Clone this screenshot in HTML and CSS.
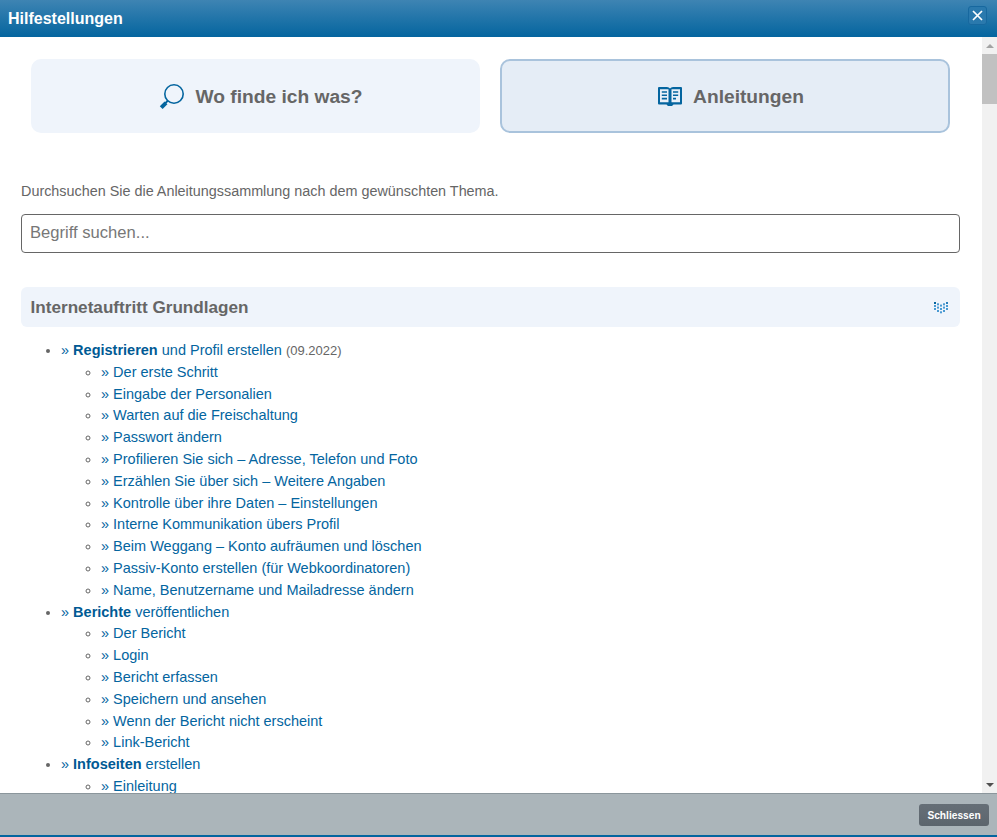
FILE: index.html
```html
<!DOCTYPE html>
<html lang="de">
<head>
<meta charset="utf-8">
<title>Hilfestellungen</title>
<link rel="stylesheet" href="styles.css">
</head>
<body>
<div class="dialog">
  <header class="titlebar">
    <span class="title">Hilfestellungen</span>
    <button class="close" aria-label="Schliessen">
      <svg width="11" height="11" viewBox="0 0 11 11"><path d="M1 1 10 10M10 1 1 10" stroke="#fff" stroke-width="1.7" fill="none"/></svg>
    </button>
  </header>
  <div class="body">
    <main class="content">
      <div class="tabs">
        <a class="tab">
          <svg class="tab-icon" width="26" height="26" viewBox="0 0 26 26"><circle cx="15" cy="10" r="9.200" fill="none" stroke="#04659f" stroke-width="1.600"/><path d="M9 16.500 6 19.500" stroke="#04659f" stroke-width="1.800"/><path d="M7 18.800 2.200 23.600" stroke="#04659f" stroke-width="4"/></svg>
          Wo finde ich was?
        </a>
        <a class="tab active">
          <svg class="tab-icon" width="26" height="22" viewBox="0 0 26 22"><path d="M2 1h8q2 0 3 1.500q1-1.500 3-1.500h8q1 0 1 1v15.500q0 1-1 1h-7.500l-1.500 1.500h-4l-1.500-1.500h-7.500q-1 0-1-1v-15.500q0-1 1-1z" fill="#04659f"/><path d="M3 3.200h8.500v13h-8.500zM14.500 3.200h8.500v13h-8.500z" fill="#e9f0f8"/><path d="M4.800 6h5.200M4.800 9.300h5.200M4.800 12.600h5.200M16 6h5.200M16 9.300h5.200M16 12.600h3" stroke="#04659f" stroke-width="1.600"/></svg>
          Anleitungen
        </a>
      </div>
      <p class="intro">Durchsuchen Sie die Anleitungssammlung nach dem gewünschten Thema.</p>
      <input class="search" type="text" placeholder="Begriff suchen...">
      <section class="panel">
        <h2 class="panel-head">Internetauftritt Grundlagen
          <svg width="14" height="12" viewBox="0 0 14 12" class="panel-icon"><g fill="#4a9ad2"><rect x="0" y="0" width="2" height="2" fill="#04659f"/><rect x="0" y="3" width="2" height="2"/><rect x="0" y="6" width="2" height="2"/><rect x="3" y="1.300" width="2" height="2"/><rect x="3" y="4.600" width="2" height="2"/><rect x="3" y="8" width="2" height="2"/><rect x="6" y="2.600" width="2" height="2"/><rect x="6" y="6" width="2" height="2"/><rect x="6" y="9.300" width="2" height="2"/><rect x="9" y="1.300" width="2" height="2"/><rect x="9" y="4.600" width="2" height="2"/><rect x="9" y="8" width="2" height="2"/><rect x="12" y="0" width="2" height="2" fill="#2a7fba"/><rect x="12" y="3" width="2" height="2"/><rect x="12" y="6" width="2" height="2"/></g></svg>
        </h2>
        <ul class="l1">
          <li><a>» <b>Registrieren</b> und Profil erstellen</a> <span class="date">(09.2022)</span>
            <ul class="l2">
              <li><a>» Der erste Schritt</a></li>
              <li><a>» Eingabe der Personalien</a></li>
              <li><a>» Warten auf die Freischaltung</a></li>
              <li><a>» Passwort ändern</a></li>
              <li><a>» Profilieren Sie sich – Adresse, Telefon und Foto</a></li>
              <li><a>» Erzählen Sie über sich – Weitere Angaben</a></li>
              <li><a>» Kontrolle über ihre Daten – Einstellungen</a></li>
              <li><a>» Interne Kommunikation übers Profil</a></li>
              <li><a>» Beim Weggang – Konto aufräumen und löschen</a></li>
              <li><a>» Passiv-Konto erstellen (für Webkoordinatoren)</a></li>
              <li><a>» Name, Benutzername und Mailadresse ändern</a></li>
            </ul>
          </li>
          <li><a>» <b>Berichte</b> veröffentlichen</a>
            <ul class="l2">
              <li><a>» Der Bericht</a></li>
              <li><a>» Login</a></li>
              <li><a>» Bericht erfassen</a></li>
              <li><a>» Speichern und ansehen</a></li>
              <li><a>» Wenn der Bericht nicht erscheint</a></li>
              <li><a>» Link-Bericht</a></li>
            </ul>
          </li>
          <li><a>» <b>Infoseiten</b> erstellen</a>
            <ul class="l2">
              <li><a>» Einleitung</a></li>
            </ul>
          </li>
        </ul>
      </section>
    </main>
    <div class="scrollbar">
      <span class="arrow up"></span>
      <span class="thumb"></span>
      <span class="spacer"></span>
      <span class="arrow down"></span>
    </div>
  </div>
  <footer class="footer">
    <button class="closebtn">Schliessen</button>
  </footer>
</div>
</body>
</html>
```
FILE: styles.css
```css
* { box-sizing: border-box; }
html, body { margin: 0; height: 100%; overflow: hidden; }
body { font-family: "Liberation Sans", Arial, sans-serif; background: #fff; color: #666; }
.dialog { height: 837px; display: flex; flex-direction: column; border-bottom: 2px solid #04659f; }
.titlebar { height: 37px; flex: none; display: flex; align-items: center; justify-content: space-between; padding: 0 10px 0 8px; background: linear-gradient(#3e84b3, #04659f); }
.title { color: #fff; font-weight: bold; font-size: 16px; }
.close { width: 19px; height: 19px; padding: 0; display: flex; align-items: center; justify-content: center; background: #2a79ad; border: 1px solid #17689f; border-radius: 3px; margin-top: -6px; }
.body { flex: 1; min-height: 0; display: flex; }
.content { flex: 1; min-width: 0; overflow: hidden; padding: 22px 22px 0 21px; }
.tabs { display: flex; gap: 20px; padding: 0 10px; }
.tab { flex: 1; height: 74px; padding: 1px 0 0 11px; border-radius: 10px; background: #eff4fb; display: flex; align-items: center; justify-content: center; gap: 10px; font-size: 19.2px; font-weight: bold; color: #666; }
.tab.active { flex: none; width: 450px; background: #e5edf6; border: 2px solid #a9c3dc; }
.tab-icon { flex: none; }
.intro { margin: 50px 0 0; font-size: 14.38px; line-height: 17px; color: #666; }
.search { display: block; width: 100%; height: 39px; margin-top: 14px; padding: 0 8px 2px; border: 1px solid #666; border-radius: 4px; font: 16.6px "Liberation Sans", Arial, sans-serif; color: #666; outline: none; }
.search::placeholder { color: #777; opacity: 1; }
.panel { margin-top: 34px; }
.panel-head { margin: 0; height: 40px; padding: 1px 12px 0 9.500px; display: flex; align-items: center; justify-content: space-between; background: #eff4fb; border-radius: 6px; font-size: 17.150px; font-weight: bold; color: #666; }
.panel-icon { flex: none; }
.l1, .l2 { margin: 0; padding-left: 40px; font-size: 14.5px; line-height: 21.8px; color: #666; }
.l1 { margin-top: 13px; }
.l2 { list-style: circle; }
a { color: #04659f; }
a b { color: #005a94; }
.date { font-size: 13px; color: #666; }
.scrollbar { width: 15px; flex: none; background: #f1f1f1; display: flex; flex-direction: column; }
.arrow { height: 17px; flex: none; display: flex; align-items: center; justify-content: center; }
.arrow::before { content: ""; border-left: 4px solid transparent; border-right: 4px solid transparent; }
.up::before { border-bottom: 4px solid #a3a3a3; }
.down::before { border-top: 4px solid #505050; }
.thumb { height: 50px; flex: none; background: #c1c1c1; }
.spacer { flex: 1; }
.footer { height: 42px; flex: none; background: #abb5ba; border-top: 1px solid #8b969c; display: flex; align-items: center; justify-content: flex-end; padding: 1px 8px 0; }
.closebtn { width: 70px; height: 22px; padding: 0; border: 0; border-radius: 3px; background: linear-gradient(#666f77, #5c656d); color: #fff; font: bold 10.2px "Liberation Sans", Arial, sans-serif; }
```
